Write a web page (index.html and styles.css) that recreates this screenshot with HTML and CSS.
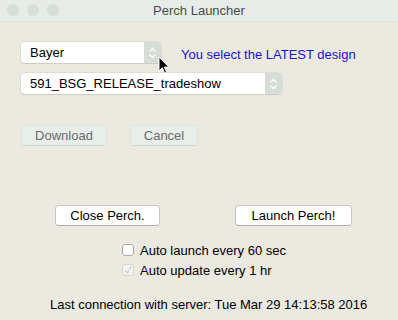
FILE: index.html
```html
<!DOCTYPE html>
<html>
<head>
  <meta charset="utf-8">
  <link rel="stylesheet" href="styles.css">
</head>
<body>
  <div class="window">
    <header class="titlebar">
      <div class="lights">
        <span class="light"></span>
        <span class="light"></span>
        <span class="light"></span>
      </div>
      <h1 class="title">Perch Launcher</h1>
    </header>

    <main class="content">
      <div class="row-top">
        <div class="select select-short">
          <span class="select-value">Bayer</span>
          <span class="select-arrows">
            <svg width="9" height="12" viewBox="0 0 9 12"><path d="M1.5 4.5 L4.5 1.5 L7.5 4.5 M1.5 7.5 L4.5 10.5 L7.5 7.5" fill="none" stroke="#fff" stroke-width="1.3"/></svg>
          </span>
        </div>
        <span class="hint">You select the LATEST design</span>
      </div>

      <div class="select select-long">
        <span class="select-value">591_BSG_RELEASE_tradeshow</span>
        <span class="select-arrows">
          <svg width="9" height="12" viewBox="0 0 9 12"><path d="M1.5 4.5 L4.5 1.5 L7.5 4.5 M1.5 7.5 L4.5 10.5 L7.5 7.5" fill="none" stroke="#fff" stroke-width="1.3"/></svg>
        </span>
      </div>

      <div class="actions">
        <button class="btn btn-disabled btn-download">Download</button>
        <button class="btn btn-disabled btn-cancel">Cancel</button>
      </div>

      <div class="launch">
        <button class="btn btn-close">Close Perch.</button>
        <button class="btn btn-launch">Launch Perch!</button>
      </div>

      <div class="checks">
        <label class="check"><span class="box"></span>Auto launch every 60 sec</label>
        <label class="check"><span class="box box-disabled">
          <svg width="10" height="10" viewBox="0 0 10 10"><path d="M2 5 L4 8 L8.5 1.5" fill="none" stroke="#d4d8d4" stroke-width="1.4"/></svg>
        </span>Auto update every 1 hr</label>
      </div>

      <p class="status">Last connection with server: Tue Mar 29 14:13:58 2016</p>
    </main>

    <svg class="cursor" width="12" height="19" viewBox="0 0 12 19">
      <path d="M1 1 L1 15 L4.3 11.8 L6.6 17.2 L8.6 16.3 L6.4 11.1 L10.8 11.1 Z" fill="#000" stroke="#fff" stroke-width="1"/>
    </svg>
  </div>
</body>
</html>
```

FILE: styles.css
```css
* {
  margin: 0;
  padding: 0;
  box-sizing: border-box;
}

body {
  background: #ece9e0;
  font-family: "Liberation Sans", Arial, sans-serif;
  font-size: 13px;
  color: #000;
  overflow: hidden;
}

.window {
  position: relative;
  width: 398px;
  height: 320px;
  background: #ece9e0;
}

.titlebar {
  position: relative;
  height: 22px;
  background: #e7ece8;
  border-bottom: 1px solid #dde2dc;
  display: flex;
  align-items: center;
  justify-content: center;
}

.lights {
  position: absolute;
  left: 7px;
  top: 4px;
  display: flex;
  gap: 8px;
}

.light {
  width: 12px;
  height: 12px;
  border-radius: 50%;
  background: #d5dfd9;
}

.title {
  font-size: 13px;
  font-weight: normal;
  color: #4b4b4b;
  line-height: 22px;
}

.content {
  padding: 20px 0 0 21px;
}

.row-top {
  display: flex;
  align-items: flex-end;
}

.select {
  display: flex;
  height: 21px;
  background: #fff;
  border-radius: 4px;
  box-shadow: 0 0 0 0.5px #cfd1cc, 0 1px 1px rgba(0, 0, 0, 0.15);
  overflow: hidden;
}

.select-short {
  width: 140px;
}

.select-long {
  width: 261px;
  margin-top: 10px;
}

.select-value {
  flex: 1;
  padding-left: 9px;
  line-height: 21px;
  white-space: nowrap;
}

.select-arrows {
  width: 17px;
  background: #d5ddd6;
  display: flex;
  align-items: center;
  justify-content: center;
}

.hint {
  margin-left: 20px;
  color: #1515d6;
  line-height: 16px;
}

.actions {
  display: flex;
  gap: 23px;
  margin-top: 31px;
}

.btn {
  height: 21px;
  font-family: inherit;
  font-size: 13px;
  border-radius: 4px;
  background: #fff;
  border: 1px solid #c4c6c2;
  border-bottom-color: #aeb0ac;
  color: #000;
}

.btn-disabled {
  background: #e8eee9;
  border: 1px solid #dde3de;
  border-bottom: 1px dotted #b9bfba;
  color: #6b6b6b;
}

.btn-download {
  width: 86px;
}

.btn-cancel {
  width: 68px;
}

.launch {
  display: flex;
  gap: 75px;
  margin-top: 59px;
  padding-left: 34px;
}

.btn-close {
  width: 105px;
}

.btn-launch {
  width: 117px;
}

.checks {
  display: flex;
  flex-direction: column;
  gap: 8px;
  margin-top: 18px;
  padding-left: 101px;
}

.check {
  display: flex;
  align-items: center;
  height: 12px;
  gap: 6px;
}

.box {
  width: 12px;
  height: 12px;
  background: #fff;
  border: 1px solid #a9aba7;
  border-radius: 3px;
  display: flex;
  align-items: center;
  justify-content: center;
}

.box-disabled {
  background: #f2f3f1;
  border-color: #d3d6d2;
}

.status {
  margin-top: 21px;
  padding-left: 29px;
  line-height: 15px;
}

.cursor {
  position: absolute;
  left: 158px;
  top: 56px;
}
```
